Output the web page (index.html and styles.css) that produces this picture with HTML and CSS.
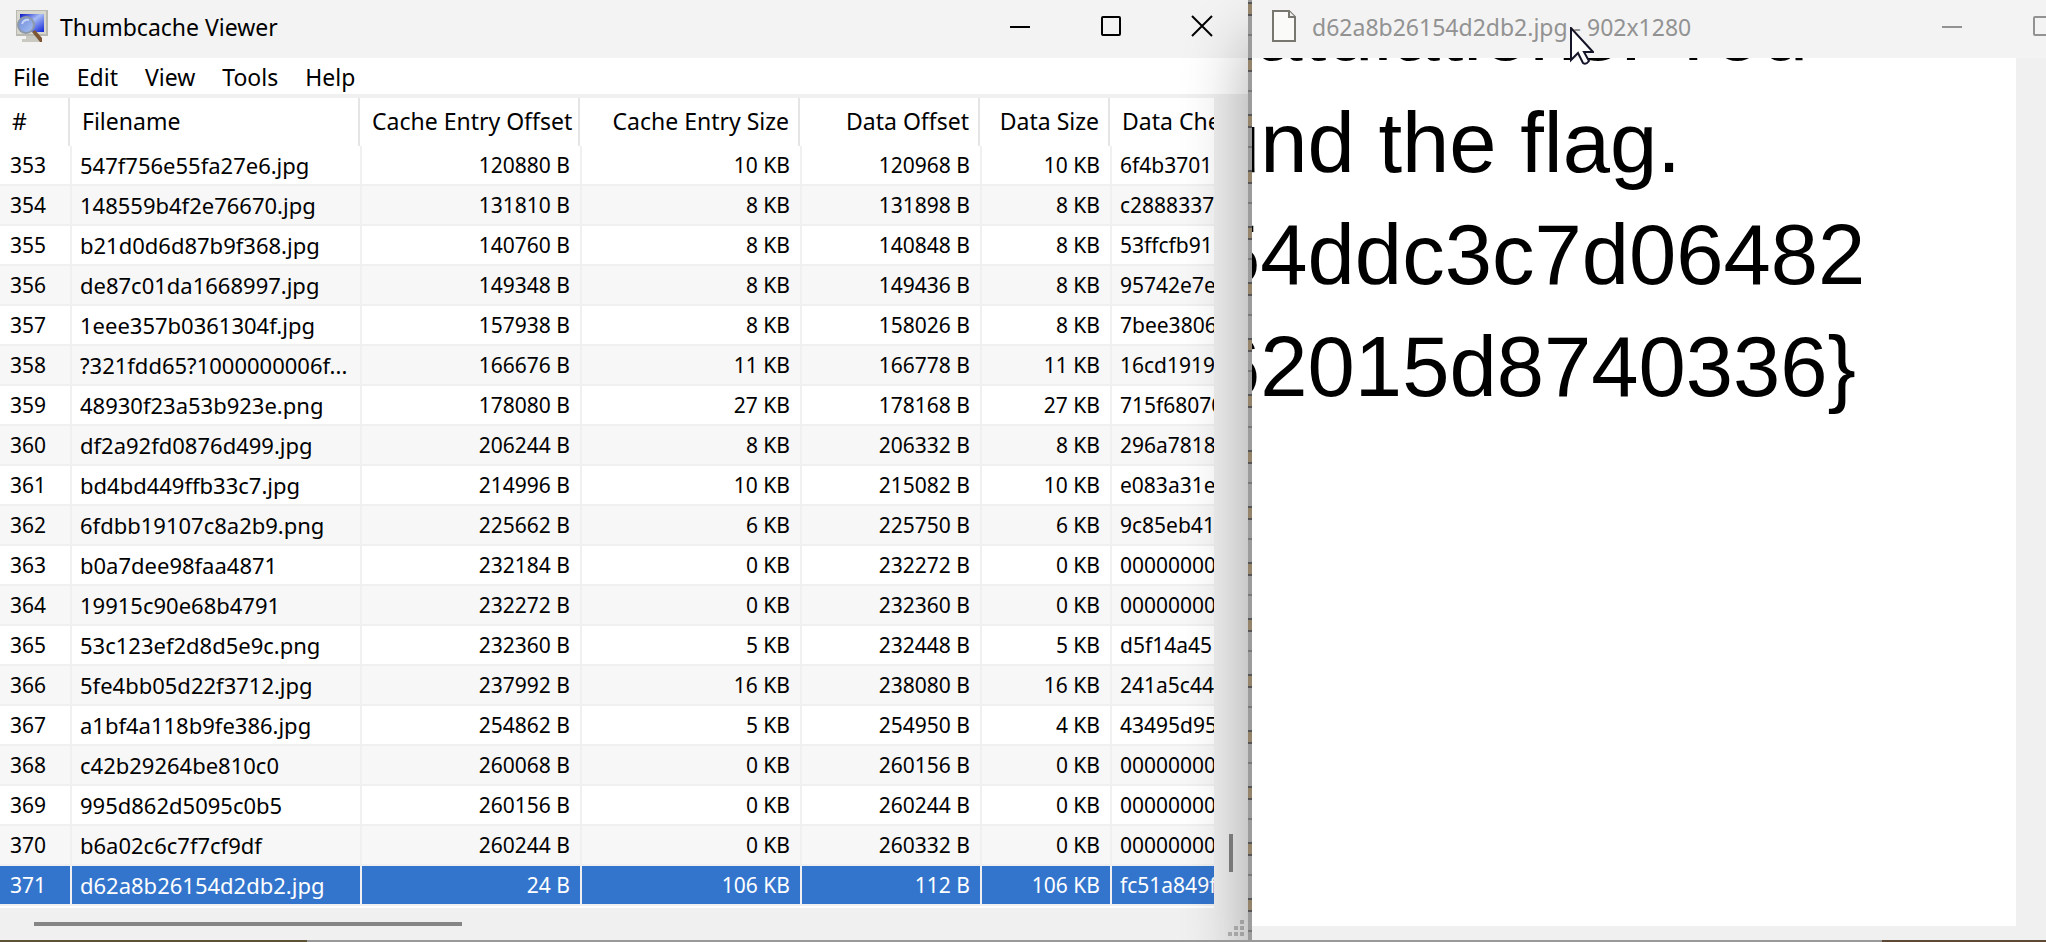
FILE: index.html
```html
<!DOCTYPE html>
<html lang="en">
<head>
<meta charset="utf-8">
<title>Thumbcache Viewer</title>
<link rel="stylesheet" href="styles.css">
</head>
<body>
<div class="desktop">
  <main class="window viewer">
    <header class="titlebar">
      <svg class="app-icon" viewBox="0 0 32 32" aria-hidden="true">
        <defs>
          <linearGradient id="screen" x1="0" y1="0" x2="1" y2="1"><stop offset="0" stop-color="#0713c4"/><stop offset=".45" stop-color="#a9bdf6"/><stop offset="1" stop-color="#0d22d8"/></linearGradient>
          <linearGradient id="lens" x1="0" y1="0" x2="1" y2="1"><stop offset="0" stop-color="#6b87d8"/><stop offset="1" stop-color="#a9c3f4"/></linearGradient>
        </defs>
        <path d="M0 0H32V26H0Z" fill="#b9b9b2"/><path d="M1 1H30V24H1Z" fill="#d8d8cf"/>
        <path d="M4 4H28V22H4Z" fill="url(#screen)"/>
        <path d="M10 26H22V29H26V32H6V29H10Z" fill="#c9c9c2"/>
        <path d="M16 22L19 20L26 28V32H24Z" fill="#7d5734"/>
        <circle cx="10" cy="15" r="8" fill="url(#lens)" stroke="#8d99a8" stroke-width="2"/>
        <path d="M6 14Q8 9 13 10" fill="none" stroke="#c6d5f7" stroke-width="2"/>
      </svg>
      <h1 class="caption">Thumbcache Viewer</h1>
      <div class="controls">
        <button type="button" aria-label="Minimize"><svg viewBox="0 0 20 20"><path d="M0 11H20"/></svg></button>
        <button type="button" aria-label="Maximize"><svg viewBox="0 0 20 20"><rect x="1" y="1" width="18" height="18" rx="1"/></svg></button>
        <button type="button" aria-label="Close"><svg viewBox="0 0 20 20"><path d="M0 0L20 20M20 0L0 20"/></svg></button>
      </div>
    </header>
    <nav class="menubar">
      <button type="button">File</button><button type="button">Edit</button><button type="button">View</button><button type="button">Tools</button><button type="button">Help</button>
    </nav>
    <div class="list">
      <div class="table-clip">
        <table>
          <colgroup><col class="c-num"><col class="c-name"><col class="c-off"><col class="c-size"><col class="c-doff"><col class="c-dsize"><col class="c-sum"></colgroup>
          <thead><tr><th scope="col">#</th><th scope="col">Filename</th><th scope="col">Cache Entry Offset</th><th scope="col">Cache Entry Size</th><th scope="col">Data Offset</th><th scope="col">Data Size</th><th scope="col">Data Che</th></tr></thead>
          <tbody>
            <tr><td>353</td><td>547f756e55fa27e6.jpg</td><td>120880 B</td><td>10 KB</td><td>120968 B</td><td>10 KB</td><td>6f4b3701</td></tr>
            <tr><td>354</td><td>148559b4f2e76670.jpg</td><td>131810 B</td><td>8 KB</td><td>131898 B</td><td>8 KB</td><td>c2888337</td></tr>
            <tr><td>355</td><td>b21d0d6d87b9f368.jpg</td><td>140760 B</td><td>8 KB</td><td>140848 B</td><td>8 KB</td><td>53ffcfb91</td></tr>
            <tr><td>356</td><td>de87c01da1668997.jpg</td><td>149348 B</td><td>8 KB</td><td>149436 B</td><td>8 KB</td><td>95742e7e</td></tr>
            <tr><td>357</td><td>1eee357b0361304f.jpg</td><td>157938 B</td><td>8 KB</td><td>158026 B</td><td>8 KB</td><td>7bee3806</td></tr>
            <tr><td>358</td><td>?321fdd65?1000000006f...</td><td>166676 B</td><td>11 KB</td><td>166778 B</td><td>11 KB</td><td>16cd1919</td></tr>
            <tr><td>359</td><td>48930f23a53b923e.png</td><td>178080 B</td><td>27 KB</td><td>178168 B</td><td>27 KB</td><td>715f68070</td></tr>
            <tr><td>360</td><td>df2a92fd0876d499.jpg</td><td>206244 B</td><td>8 KB</td><td>206332 B</td><td>8 KB</td><td>296a7818</td></tr>
            <tr><td>361</td><td>bd4bd449ffb33c7.jpg</td><td>214996 B</td><td>10 KB</td><td>215082 B</td><td>10 KB</td><td>e083a31e</td></tr>
            <tr><td>362</td><td>6fdbb19107c8a2b9.png</td><td>225662 B</td><td>6 KB</td><td>225750 B</td><td>6 KB</td><td>9c85eb41</td></tr>
            <tr><td>363</td><td>b0a7dee98faa4871</td><td>232184 B</td><td>0 KB</td><td>232272 B</td><td>0 KB</td><td>00000000</td></tr>
            <tr><td>364</td><td>19915c90e68b4791</td><td>232272 B</td><td>0 KB</td><td>232360 B</td><td>0 KB</td><td>00000000</td></tr>
            <tr><td>365</td><td>53c123ef2d8d5e9c.png</td><td>232360 B</td><td>5 KB</td><td>232448 B</td><td>5 KB</td><td>d5f14a45</td></tr>
            <tr><td>366</td><td>5fe4bb05d22f3712.jpg</td><td>237992 B</td><td>16 KB</td><td>238080 B</td><td>16 KB</td><td>241a5c44</td></tr>
            <tr><td>367</td><td>a1bf4a118b9fe386.jpg</td><td>254862 B</td><td>5 KB</td><td>254950 B</td><td>4 KB</td><td>43495d95</td></tr>
            <tr><td>368</td><td>c42b29264be810c0</td><td>260068 B</td><td>0 KB</td><td>260156 B</td><td>0 KB</td><td>00000000</td></tr>
            <tr><td>369</td><td>995d862d5095c0b5</td><td>260156 B</td><td>0 KB</td><td>260244 B</td><td>0 KB</td><td>00000000</td></tr>
            <tr><td>370</td><td>b6a02c6c7f7cf9df</td><td>260244 B</td><td>0 KB</td><td>260332 B</td><td>0 KB</td><td>00000000</td></tr>
            <tr class="selected"><td>371</td><td>d62a8b26154d2db2.jpg</td><td>24 B</td><td>106 KB</td><td>112 B</td><td>106 KB</td><td>fc51a849f</td></tr>
          </tbody>
        </table>
      </div>
      <div class="vscroll"><div class="vthumb"></div></div>
    </div>
    <footer class="hscroll">
      <div class="hthumb"></div>
      <svg class="grip" viewBox="0 0 16 16" aria-hidden="true"><path d="M12 0h4v4h-4zM6 6h4v4h-4zM12 6h4v4h-4zM0 12h4v4h-4zM6 12h4v4h-4zM12 12h4v4h-4z"/></svg>
    </footer>
  </main>
  <section class="window preview">
    <header class="titlebar inactive">
      <svg class="file-icon" viewBox="0 0 24 32" aria-hidden="true"><path d="M1 1H17L23 7V31H1Z" fill="#fafaf9" stroke="#77776f" stroke-width="2"/><path d="M17 1V7H23" fill="#eee" stroke="#77776f" stroke-width="2"/></svg>
      <h2 class="caption">d62a8b26154d2db2.jpg - 902x1280</h2>
      <div class="controls">
        <button type="button" aria-label="Minimize preview"><svg viewBox="0 0 20 20"><path d="M0 11H20"/></svg></button>
        <button type="button" aria-label="Maximize preview"><svg viewBox="0 0 20 20"><rect x="1" y="1" width="18" height="18" rx="1"/></svg></button>
      </div>
    </header>
    <div class="canvas">
      <div class="picture">
        <p class="greeting">ratulations! You</p>
        <p>und the flag.</p>
        <p>54ddc3c7d06482</p>
        <p>62015d8740336}</p>
      </div>
    </div>
    <svg class="cursor" viewBox="0 0 24 38" aria-hidden="true"><path d="M1 1V33L8 26L13 36Q16 38 19 34L14 25H23Z" fill="#fff" stroke="#15152a" stroke-width="2"/></svg>
  </section>
  <div class="strip"></div>
</div>
</body>
</html>
```
FILE: styles.css
```css
* { box-sizing: border-box; }
body { margin: 0; font: 21px/28px "Noto Sans", "Open Sans", sans-serif; color: #000; overflow: hidden; }
button { border: 0; padding: 0; background: none; font: inherit; color: inherit; }
h1, h2, p { margin: 0; font-weight: 400; }

.desktop { display: grid; grid-template-columns: minmax(0, 61fr) minmax(0, 39fr); grid-template-rows: 1fr 2px; height: 100vh; min-height: 0; background: #999; }
.window { display: flex; flex-direction: column; min-width: 0; min-height: 0; background: #f0f0f0; }
.viewer { overflow: hidden; }
.preview {
  position: relative;
  border-left: 4px solid transparent;
  background: linear-gradient(#f0f0f0, #f0f0f0) padding-box, repeating-linear-gradient(#9c9c9c 0 2px, #555 2px 4px, #94846c 4px 14px, #555 14px 16px, #9c9c9c 16px 34px, #777 34px 36px, #9c9c9c 36px 56px) border-box;
  box-shadow: 0 40px 60px rgba(0, 0, 0, .32);
  clip-path: inset(0 0 0 -90px);
}
.strip { position: relative; grid-column: 1 / -1; background: linear-gradient(90deg, #5f5337 0 15%, #999 15% 92%, #5e4836 92%); }

.titlebar { display: flex; align-items: center; flex: none; height: 58px; padding-left: 16px; padding-bottom: 6px; background: #f3f3f3; overflow: hidden; }
.caption { flex: 1; padding-top: 2px; font-size: 23px; line-height: 28px; white-space: nowrap; }
.app-icon { width: 32px; height: 32px; margin-right: 12px; }
.file-icon { width: 24px; height: 32px; margin-right: 16px; }
.inactive { padding-left: 20px; margin-right: -43px; color: #929292; }
.controls { display: flex; flex: none; }
.controls button { display: flex; align-items: center; justify-content: center; width: 91px; height: 52px; }
.viewer .controls { padding-right: 1px; }
.controls svg { width: 20px; height: 20px; fill: none; stroke: currentColor; stroke-width: 2; overflow: visible; }

.menubar { display: flex; flex: none; gap: 27px; height: 40px; padding: 5px 13px 3px; border-bottom: 4px solid #f0f0f0; background: #fff; font-size: 23px; }

.list { display: flex; flex: none; }
.table-clip { flex: 1; min-width: 0; overflow: hidden; background: #fff; padding-bottom: 2px; }
table { width: 100%; border-collapse: separate; border-spacing: 0; table-layout: fixed; }
.c-num { width: 72px; }
.c-name { width: 290px; }
.c-off, .c-size { width: 220px; }
.c-doff { width: 180px; }
.c-dsize { width: 130px; }
th, td { padding: 0 10px 0 8px; font-weight: 400; text-align: left; white-space: nowrap; overflow: hidden; }
th { height: 48px; padding: 0 13px 2px 10px; font-size: 23px; background: linear-gradient(#e5e5e5, #e5e5e5) right 2px top / 2px 100% no-repeat; }
td { height: 40px; border-right: 2px solid #f0f0f0; border-bottom: 2px solid #f0f0f0; }
td:first-child { padding-left: 10px; }
th:first-child { padding-left: 12px; }
td:nth-child(2) { font-size: 22px; }
th:nth-child(n+3):nth-child(-n+6), td:nth-child(n+3):nth-child(-n+6) { text-align: right; }
th:last-child, td:last-child { padding-right: 0; border-right: 0; background-image: none; }
tbody tr:nth-child(even) { background: #f7f7f7; }
tbody .selected { background: #3375cd; color: #fff; }

.vscroll { display: flex; flex-direction: column; justify-content: flex-end; align-items: center; flex: none; width: 34px; padding-bottom: 36px; }
.vthumb { width: 4px; height: 38px; background: #858585; }
.hscroll { display: flex; align-items: center; justify-content: space-between; flex: 1; min-height: 32px; padding: 0 4px 0 34px; }
.hthumb { width: 428px; height: 4px; background: #858585; }
.grip { align-self: flex-end; width: 16px; height: 16px; margin-bottom: 4px; fill: #b9b9b9; }

.canvas { display: flex; flex: 1; min-height: 0; padding: 0 30px 14px 0; background: #f0f0f0; }
.picture { display: flex; flex: 1; flex-direction: column; justify-content: flex-start; min-width: 0; overflow: hidden; background: #fff; font-family: "Liberation Sans", Arial, sans-serif; font-size: 85px; line-height: 112px; white-space: nowrap; }
.picture p { flex: none; margin-left: -39px; }
.picture .greeting { margin-top: -83px; margin-left: -25px; }
.cursor { position: absolute; left: 318px; top: 27px; width: 24px; height: 38px; }
```
